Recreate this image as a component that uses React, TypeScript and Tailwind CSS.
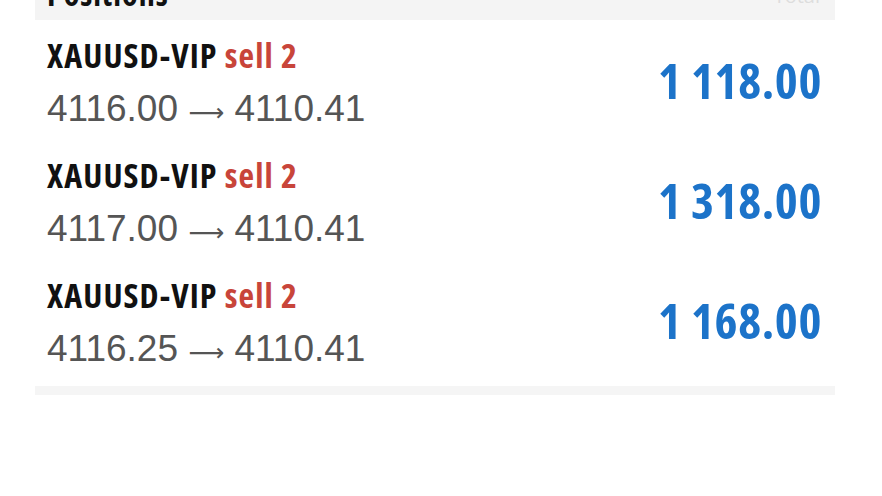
import React from 'react';

interface Position {
  symbol: string;
  side: string;
  open: string;
  current: string;
  profit: string;
}

const positions: Position[] = [
  { symbol: 'XAUUSD-VIP', side: 'sell 2', open: '4116.00', current: '4110.41', profit: '1 118.00' },
  { symbol: 'XAUUSD-VIP', side: 'sell 2', open: '4117.00', current: '4110.41', profit: '1 318.00' },
  { symbol: 'XAUUSD-VIP', side: 'sell 2', open: '4116.25', current: '4110.41', profit: '1 168.00' },
];

const PositionRow: React.FC<{ p: Position }> = ({ p }) => {
  return (
    <div className="flex h-[120px] items-center justify-between pl-[12px] pr-[13px]">
      <div className="flex flex-col pt-[6px]">
        <div className="font-['Open_Sans',sans-serif] text-[34px] leading-[44px] font-bold [font-stretch:75%] tracking-[1.1px] text-[#111111]">
          {p.symbol} <span className="text-[#c8453a]">{p.side}</span>
        </div>
        <div className="mt-[12px] font-['Liberation_Sans',Arial,sans-serif] text-[37px] leading-[40px] text-[#555555]">
          {p.open} <span className="font-['DejaVu_Sans',sans-serif] text-[25px]">⟶</span> {p.current}
        </div>
      </div>
      <div className="font-['Open_Sans',sans-serif] text-[49px] leading-none font-bold [font-stretch:75%] tracking-[0.6px] text-[#1c73c9]">
        {p.profit}
      </div>
    </div>
  );
};

export default function App() {
  return (
    <div className="w-[882px] h-[496px] bg-white overflow-hidden">
      <div className="ml-[35px] w-[800px]">
        <div className="h-[20px] bg-[#f4f4f4] overflow-hidden flex justify-between pl-[12px] pr-[15px]">
          <div className="-mt-[22px] font-['Open_Sans',sans-serif] text-[32px] leading-none font-bold [font-stretch:75%] tracking-[1px] text-[#111111]">
            Positions
          </div>
          <div className="-mt-[14px] font-['Open_Sans',sans-serif] text-[20px] leading-none text-[#dddddd]">
            Total
          </div>
        </div>
        {positions.map((p, i) => (
          <PositionRow key={i} p={p} />
        ))}
        <div className="mt-[6px] h-[9px] bg-[#f5f5f5]" />
      </div>
    </div>
  );
}
